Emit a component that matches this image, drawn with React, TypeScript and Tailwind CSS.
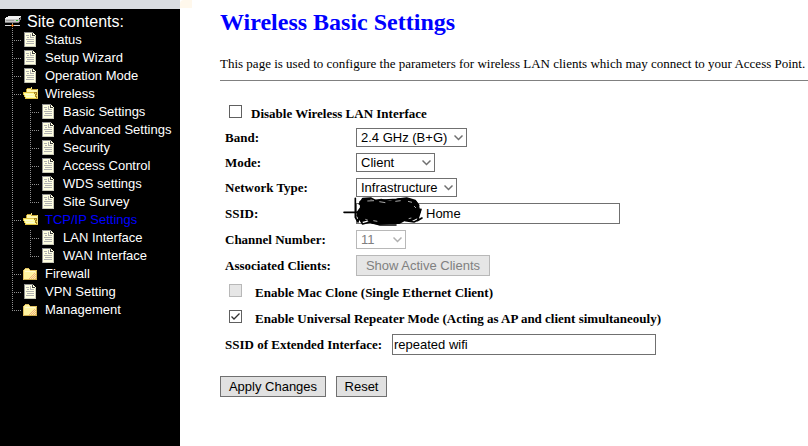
import type { ReactNode } from "react";

type IconName = "page" | "open" | "closed";
type Item = { label: string; icon: IconName; active?: boolean; children?: Item[] };

const menu: Item[] = [
  { label: "Status", icon: "page" },
  { label: "Setup Wizard", icon: "page" },
  { label: "Operation Mode", icon: "page" },
  {
    label: "Wireless",
    icon: "open",
    children: [
      { label: "Basic Settings", icon: "page" },
      { label: "Advanced Settings", icon: "page" },
      { label: "Security", icon: "page" },
      { label: "Access Control", icon: "page" },
      { label: "WDS settings", icon: "page" },
      { label: "Site Survey", icon: "page" },
    ],
  },
  {
    label: "TCP/IP Settings",
    icon: "open",
    active: true,
    children: [
      { label: "LAN Interface", icon: "page" },
      { label: "WAN Interface", icon: "page" },
    ],
  },
  { label: "Firewall", icon: "closed" },
  { label: "VPN Setting", icon: "page" },
  { label: "Management", icon: "closed" },
];

function PageIcon() {
  return (
    <svg width="18" height="18" viewBox="0 0 18 18" shapeRendering="crispEdges" aria-hidden="true">
      <path d="M2 1h9v3h3v12H2z" fill="#ffffe1" />
      <path d="M2 1h9v1H3v14H2z" fill="#909090" />
      <path d="M3 15h11v1H3zM13 5h1v10h-1z" fill="#c8c8b8" />
      <path d="M11 2h1v1h1v1h-2z" fill="#ffffe1" />
      <path d="M10 2h1v2h2v1h-3z" fill="#404040" />
      <path d="M4 4h3v1H4zM8 3h1v4H8zM5 6h2v1H5zM9 6h3v1H9zM4 8h8v1H4zM5 10h7v1H5zM4 12h8v1H4z" fill="#b0b0b0" />
    </svg>
  );
}

function OpenFolderIcon() {
  return (
    <svg width="18" height="18" viewBox="0 0 18 18" shapeRendering="crispEdges" aria-hidden="true">
      <path d="M4 4h1V3h4V2h1v2h6v10H4z" fill="#f0e080" />
      <path d="M5 3h4v1H5zM4 4h1v3H4zM9 4h6v1H9z" fill="#c8a832" />
      <path d="M5 4h4v1h6v2H5z" fill="#fff8b0" />
      <path d="M1 7h11v1h1v2h1v2h1v2H4v-2H3v-2H2V8H1z" fill="#ffff9c" />
      <path d="M1 7h11v1H1zM1 8h1v2H1zM2 10h1v2H2zM3 12h1v2H3zM4 13h12v1H4z" fill="#e0c040" />
      <path d="M12 7h3v6h-1v-1h-1v-3h-1z" fill="#a88420" />
      <path d="M13 8h1v1h-1zM14 10h1v1h-1z" fill="#e8d060" />
      <path d="M3 9h8v1H3zM4 11h8v1H4z" fill="#fffbd0" />
    </svg>
  );
}

function ClosedFolderIcon() {
  return (
    <svg width="18" height="18" viewBox="0 0 18 18" shapeRendering="crispEdges" aria-hidden="true">
      <path d="M1 5h1V4h1V3h4v1h1v1h7v10H1z" fill="#fff3a0" />
      <path d="M3 3h4v1H3zM2 4h1v1H2zM7 4h1v1H7zM8 5h7v1H8zM1 5h1v10H1z" fill="#e0c060" />
      <path d="M2 14h13v1H2zM14 6h1v9h-1z" fill="#d0b050" />
      <path d="M3 6h10v1H3z" fill="#fffbd0" />
      <path d="M12 8h1v1h-1zM11 9h1v1h-1zM13 9h1v1h-1zM10 10h1v1h-1zM12 10h1v1h-1zM9 11h1v1H9zM11 11h1v1h-1zM13 11h1v1h-1zM8 12h1v1H8zM10 12h1v1h-1zM12 12h1v1h-1zM7 13h1v1H7zM9 13h1v1H9zM11 13h1v1h-1zM13 13h1v1h-1z" fill="#f0b080" />
    </svg>
  );
}

function ServerIcon() {
  return (
    <svg width="18" height="18" viewBox="0 0 18 18" shapeRendering="crispEdges" aria-hidden="true">
      <path d="M4 3h13v1h-1v1h-1v1H1V5h1V4h2z" fill="#f0f0f0" />
      <path d="M1 6h14v3H1z" fill="#c8c8c8" />
      <path d="M15 6h1V4h1v3h-1v2h-1zM1 9h14v1H1z" fill="#808080" />
      <path d="M2 7h8v1H2z" fill="#a0a0a0" />
      <path d="M12 7h2v1h-2z" fill="#30c030" />
      <path d="M1 12h15v1H1z" fill="#d8d8d8" />
      <path d="M8 10h1v2H8z" fill="#909090" />
      <path d="M7 12h3v1H7zM8 11h1v3H8z" fill="#e88020" />
      <path d="M8 15h1v1H8zM8 17h1v1H8z" fill="#909090" />
    </svg>
  );
}

const icons: Record<IconName, ReactNode> = {
  page: <PageIcon />,
  open: <OpenFolderIcon />,
  closed: <ClosedFolderIcon />,
};

// dotted connector to the left of each tree entry
function Branch({ kind }: { kind: "line" | "join" | "end" }) {
  return (
    <svg width="18" height="18" viewBox="0 0 18 18" shapeRendering="crispEdges" aria-hidden="true">
      <path d={kind === "end" ? "M8.5 1v9" : "M8.5 1v18"} stroke="#909090" strokeDasharray="1 1" />
      {kind !== "line" && <path d="M10 9.5h8" stroke="#909090" strokeDasharray="1 1" />}
    </svg>
  );
}

function Tree({ items, nested = false }: { items: Item[]; nested?: boolean }) {
  return (
    <ul>
      {items.map((item, i) => (
        <li key={item.label}>
          <a href="#" className={`flex h-[18px] items-center whitespace-nowrap ${item.active ? "text-[#0000ff]" : "text-white"}`}>
            {nested && <Branch kind="line" />}
            <Branch kind={i === items.length - 1 ? "end" : "join"} />
            {icons[item.icon]}
            <span className="pl-[5px]">{item.label}</span>
          </a>
          {item.children && <Tree items={item.children} nested />}
        </li>
      ))}
    </ul>
  );
}

function Select({ id, value, width, disabled = false }: { id: string; value: string; width: string; disabled?: boolean }) {
  return (
    <span className={`relative inline-flex ${width}`}>
      <select
        id={id}
        disabled={disabled}
        className="h-[19px] w-full appearance-none border border-[#707070] bg-white pl-1 font-['Liberation_Sans',Arial,sans-serif] text-[13px] leading-4 font-normal text-black disabled:border-[#b8b8b8] disabled:text-[#808080]"
      >
        <option>{value}</option>
      </select>
      <svg className="pointer-events-none absolute top-[6px] right-1" width="9" height="7" viewBox="0 0 9 7" aria-hidden="true">
        <path d="M0.5 1.5l4 4l4-4" fill="none" stroke={disabled ? "#b0b0b0" : "#707070"} strokeWidth="1.5" />
      </svg>
    </span>
  );
}

function Row({ id, label, height, children }: { id: string; label: string; height: string; children: ReactNode }) {
  return (
    <div className={`flex items-center ${height}`}>
      <label htmlFor={id} className="w-[131px] shrink-0">{label}</label>
      {children}
    </div>
  );
}

function Check({ id, label, gap, checked = false, disabled = false }: { id: string; label: string; gap: string; checked?: boolean; disabled?: boolean }) {
  return (
    <div className={`flex items-center pt-px pl-1 ${gap}`}>
      <span className="relative mb-1 flex">
        <input
          id={id}
          type="checkbox"
          defaultChecked={checked}
          disabled={disabled}
          className="peer size-[13px] appearance-none border border-[#606060] bg-white disabled:border-[#b8b8b8] disabled:bg-[#e6e6e6]"
        />
        <svg className="pointer-events-none absolute inset-0 hidden peer-checked:block" width="13" height="13" viewBox="0 0 13 13" aria-hidden="true">
          <path d="M2.5 6.5l2.5 2.5l5.5-5.5" fill="none" stroke="#303030" strokeWidth="1.3" />
        </svg>
      </span>
      <label htmlFor={id}>{label}</label>
    </div>
  );
}

function Scribble() {
  return (
    <svg className="pointer-events-none absolute -top-[7px] -left-[14px]" width="84" height="30" viewBox="6 18 252 90" aria-hidden="true">
      <path d="M58 34L76 24L102 30L124 26L150 32L178 24L210 26L230 34L238 50L242 66L234 84L214 94L196 92L178 102L150 102L122 104L98 102L80 92L66 96L54 84L50 66L60 52z" />
      <g fill="none" stroke="#000" strokeWidth="5" strokeLinejoin="round" strokeLinecap="round">
        <path d="M12 67H60M46 25V82L54 96L60 60L52 76L68 102L90 96L120 105H168" />
        <path d="M58 42L68 26L92 24L108 32L134 30L170 28L200 24L226 32L236 46L232 60L243 58L232 92L246 84L222 96L196 92" />
      </g>
      <g fill="none" stroke="#fff" strokeWidth="2">
        <path d="M82 33l20-1M118 35l18 3M166 34l16-2M204 34l12 3M222 48l6 6M76 88l8 3M100 92l12 2M206 86l8-2" />
      </g>
    </svg>
  );
}

const field = "h-[21px] w-[264px] border border-[#707070] bg-white font-['Liberation_Sans',Arial,sans-serif] text-[13px] font-normal text-black";
const button = "h-[21px] border border-[#707070] bg-[#e1e1e1] font-['Liberation_Sans',Arial,sans-serif] text-[13px] leading-4 font-normal text-black disabled:border-[#b8b8b8] disabled:bg-[#e6e6e6] disabled:text-[#808080]";

export default function App() {
  return (
    <div className="flex min-h-screen bg-white text-black">
      <aside className="flex w-[180px] shrink-0 flex-col bg-black font-['Liberation_Sans',Arial,sans-serif] text-[13px] leading-[18px]">
        <div className="h-[9px] bg-[#dadde1]" />
        <nav className="pt-1 pl-1">
          <div className="flex h-[18px] items-center text-base leading-[18px] text-white">
            <ServerIcon />
            <span className="pl-[5px]">Site contents:</span>
          </div>
          <Tree items={menu} />
        </nav>
      </aside>

      <main className="min-w-0 flex-1 overflow-hidden font-['Liberation_Serif','Times_New_Roman',serif] text-[13px] leading-4">
        <div className="h-2 w-3 rounded-tl bg-[#fff8ec]" />
        <div className="pl-10">
          <h1 className="text-2xl leading-7 font-bold text-[#0000ff]">Wireless Basic Settings</h1>
          <p className="mt-5 whitespace-nowrap">
            This page is used to configure the parameters for wireless LAN clients which may connect to your Access Point.
          </p>
          <hr className="mt-2 border-[#808080]" />

          <form className="mt-5 pl-[5px] font-bold" onSubmit={(e) => e.preventDefault()}>
            <div className="flex h-[24px] items-center">
              <Check id="disable-wlan" label="Disable Wireless LAN Interface" gap="gap-[9px]" />
            </div>
            <Row id="band" label="Band:" height="h-[25px]">
              <Select id="band" value="2.4 GHz (B+G)" width="w-[111px]" />
            </Row>
            <Row id="mode" label="Mode:" height="h-[25px]">
              <Select id="mode" value="Client" width="w-[79px]" />
            </Row>
            <Row id="network" label="Network Type:" height="h-[25px]">
              <Select id="network" value="Infrastructure" width="w-[101px]" />
            </Row>
            <Row id="ssid" label="SSID:" height="h-[27px]">
              <span className="relative flex">
                <input id="ssid" type="text" defaultValue="Home" className={`${field} pl-[69px]`} />
                <Scribble />
              </span>
            </Row>
            <Row id="channel" label="Channel Number:" height="h-[25px]">
              <Select id="channel" value="11" width="w-[50px]" disabled />
            </Row>
            <Row id="clients" label="Associated Clients:" height="h-[27px]">
              <button id="clients" type="button" disabled className={`${button} w-[134px]`}>Show Active Clients</button>
            </Row>
            <div className="flex h-[26px] items-center">
              <Check id="mac-clone" label="Enable Mac Clone (Single Ethernet Client)" gap="gap-[13px]" disabled />
            </div>
            <div className="flex h-[26px] items-center">
              <Check id="repeater" label="Enable Universal Repeater Mode (Acting as AP and client simultaneouly)" gap="gap-[13px]" checked />
            </div>
            <div className="flex h-[27px] items-center">
              <label htmlFor="ext-ssid" className="w-[167px] shrink-0">SSID of Extended Interface:</label>
              <input id="ext-ssid" type="text" defaultValue="repeated wifi" className={`${field} pl-px`} />
            </div>
            <div className="mt-[18px] -ml-[5px] flex gap-[10px]">
              <button type="submit" className={`${button} w-[106px]`}>Apply Changes</button>
              <button type="reset" className={`${button} w-[51px]`}>Reset</button>
            </div>
          </form>
        </div>
      </main>
    </div>
  );
}
